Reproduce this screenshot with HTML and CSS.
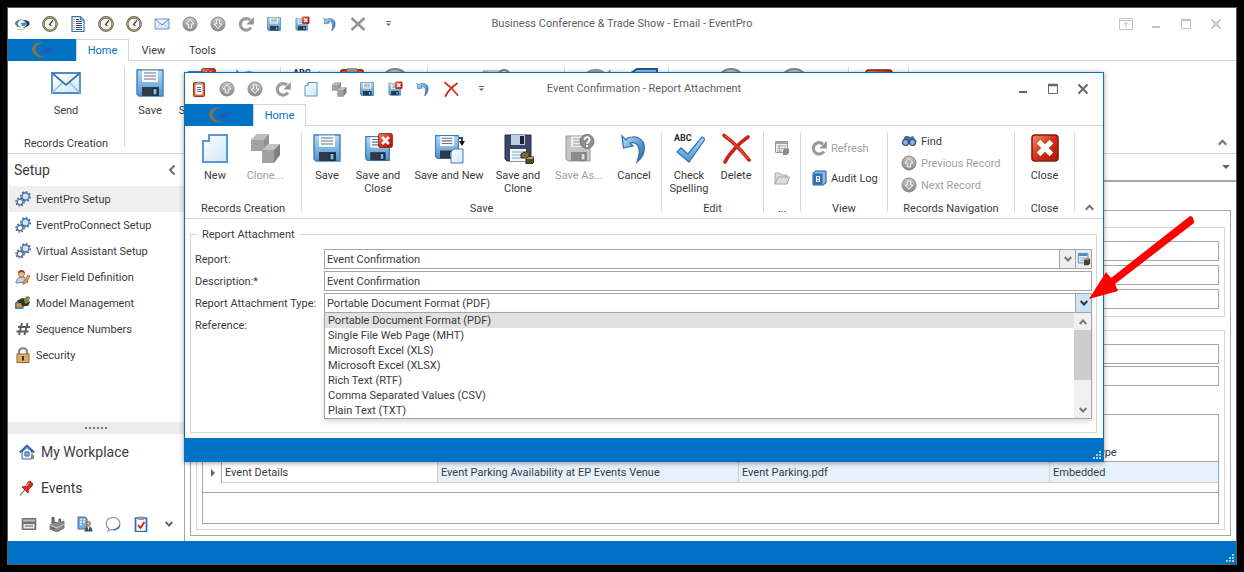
FILE: index.html
```html
<!DOCTYPE html>
<html lang="en">
<head>
<meta charset="utf-8">
<title>Business Conference &amp; Trade Show - Email - EventPro</title>
<link rel="stylesheet" href="styles.css">
</head>
<body>
<svg class="sprite" aria-hidden="true">
  <defs>
    <linearGradient id="gBlue" x1="0" y1="0" x2="0" y2="1"><stop offset="0" stop-color="#b5dcf8"/><stop offset="1" stop-color="#4f92cf"/></linearGradient>
    <linearGradient id="gPage" x1="0" y1="0" x2="1" y2="1"><stop offset="0" stop-color="#fff"/><stop offset="1" stop-color="#cfe6f8"/></linearGradient>
    <linearGradient id="gRed" x1="0" y1="0" x2="1" y2="1"><stop offset="0" stop-color="#e8906a"/><stop offset=".5" stop-color="#d2301a"/><stop offset="1" stop-color="#a81206"/></linearGradient>
    <linearGradient id="gGray" x1="0" y1="0" x2="0" y2="1"><stop offset="0" stop-color="#c6c6c6"/><stop offset="1" stop-color="#868686"/></linearGradient>
    <linearGradient id="gUndo" x1="0" y1="0" x2="1" y2="1"><stop offset="0" stop-color="#b9e2fb"/><stop offset="1" stop-color="#1d5fa8"/></linearGradient>
  </defs>
  <symbol id="floppy" viewBox="0 0 32 32">
    <path d="M3 3h26v26H5l-2-2z" fill="url(#gBlue)" stroke="#3f7fba" stroke-width="1.4"/>
    <path d="M8 3.500h16V15H8z" fill="#f7f9fb"/><path d="M10 6h12M10 9h12M10 12h12" stroke="#6f7782" stroke-width="1.2"/>
    <path d="M8 20h17v9H8z" fill="#2f3b46"/><path d="M19 21.500h4V28h-4z" fill="#79bdf0" stroke="#12202c"/>
  </symbol>
  <symbol id="badge" viewBox="0 0 16 16"><rect x="1.500" y="1.500" width="13" height="13" rx="1.500" fill="url(#gRed)" stroke="#8f1a0c" stroke-width=".8"/><path d="M4.800 4.800l6.400 6.400M11.200 4.800l-6.400 6.400" stroke="#fff" stroke-width="2.600"/></symbol>
  <symbol id="save-close" viewBox="0 0 32 32"><use href="#floppy" x="1" y="2" width="29" height="29"/><use href="#badge" x="15" y="0" width="17" height="17"/></symbol>
  <symbol id="page" viewBox="0 0 32 32"><path d="M10 3h18v27H4V9h6z" fill="url(#gPage)" stroke="#5a96cf" stroke-width="2"/><path d="M10 3v6H4" fill="none" stroke="#5a96cf"/></symbol>
  <symbol id="save-new" viewBox="0 0 32 32"><use href="#floppy" x="0" y="1" width="28" height="28"/><path d="M18 20l3-3h9v14H18z" fill="url(#gPage)" stroke="#3f7fba"/><path d="M26 6h3v4" fill="none" stroke="#111" stroke-width="1.500"/><path d="M26 9h6l-3 5z" fill="#111"/></symbol>
  <symbol id="save-clone" viewBox="0 0 32 32"><path d="M3 3h26v26H5l-2-2z" fill="#3e4569" stroke="#262b49"/><path d="M9 3h14v10H9z" fill="#b9d0e0"/><path d="M18 4h4v8h-4z" fill="#1c2334"/><path d="M8 17h16v12H8z" fill="#f2f7fc"/><path d="M10 20h12M10 23h12M10 26h9" stroke="#78a9d2"/><path d="M19 22l3-2h5v6h-8z" fill="#75693a" stroke="#383010"/><path d="M24 27l3-2h5v5l-2 2h-6z" fill="#574b20" stroke="#2b240b"/><path d="M24 27l3-2h5l-2 2z" fill="#b5a66f"/></symbol>
  <symbol id="save-as" viewBox="0 0 32 32"><path d="M3 4h24v25H5l-2-2z" fill="#c5c5c5" stroke="#999"/><path d="M8 4.500h13V15H8z" fill="#eee"/><path d="M10 7h10M10 10h9M10 13h9" stroke="#999"/><path d="M8 20h16v9H8z" fill="#8c8c8c"/><path d="M18 21.500h4V28h-4z" fill="#ddd" stroke="#777"/><circle cx="24" cy="9.500" r="7" fill="#8e8e8e" stroke="#777"/><path d="M21.500 8c0-4 5.500-3.500 5 0 0 2-2.500 2-2.500 4M24 13v2" fill="none" stroke="#fff" stroke-width="1.800"/></symbol>
  <symbol id="undo" viewBox="0 0 32 32"><path d="M4 4l1.500 12L15 14l-3-3c8-2 12 6 7 19 11-9 10-26-5-25-3 0-5 1-6 3z" fill="url(#gUndo)" stroke="#2b6fb3" stroke-width="1.200"/></symbol>
  <symbol id="delete" viewBox="0 0 32 32"><path d="M4 3.500C12 9 22 19 29 28M28 5C19 11 9 22 5 30" fill="none" stroke="#cb2413" stroke-width="3.600" stroke-linecap="round"/><path d="M5 4C12 9 21 18 28 27" fill="none" stroke="#ec6a56"/></symbol>
  <symbol id="cross" viewBox="0 0 32 32"><path d="M3 4l26 24M29 4L3 28" stroke="#939393" stroke-width="5"/></symbol>
  <symbol id="spell" viewBox="0 0 32 32"><path d="M4 20l4-4 7 6L29 5l3 2-16 23z" fill="url(#gBlue)" stroke="#3577bb" stroke-width="1.300"/></symbol>
  <symbol id="cubes" viewBox="0 0 32 32"><path d="M2 8l6-6h12v12l-5 5H2z" fill="#8f8f8f"/><path d="M2 8l6-6h12l-5 6z" fill="#bcbcbc"/><path d="M2 8h13v11H2z" fill="#a2a2a2"/><path d="M13 18l6-6h12v11l-6 8H13z" fill="#7f7f7f"/><path d="M13 18l6-6h12l-6 6z" fill="#c2c2c2"/><path d="M13 18h12v13H13z" fill="#a0a0a0"/></symbol>
  <symbol id="up" viewBox="0 0 16 16"><circle cx="8" cy="8" r="7" fill="url(#gGray)" stroke="#888"/><path d="M8 3.500L12 8H9.700v4H6.300V8H4z" fill="#aaa" stroke="#fff" stroke-width=".9"/></symbol>
  <symbol id="down" viewBox="0 0 16 16"><circle cx="8" cy="8" r="7" fill="url(#gGray)" stroke="#888"/><path d="M8 12.500L4 8h2.300V4h3.400v4H12z" fill="#aaa" stroke="#fff" stroke-width=".9"/></symbol>
  <symbol id="refresh" viewBox="0 0 16 16"><path d="M13 11.500A5.800 5.800 0 1 1 12 4" fill="none" stroke="#9b9b9b" stroke-width="3.200"/><path d="M15.800 1v7.500H8.300z" fill="#929292"/></symbol>
  <symbol id="clock" viewBox="0 0 16 16"><circle cx="8" cy="8" r="6.700" fill="#f4f6f2" stroke="#6c6a4c" stroke-width="2.400"/><circle cx="8" cy="8" r="6.700" fill="none" stroke="#b5b28f" stroke-width=".7"/><path d="M11 4.500L7.500 8.500l2 1.500" fill="none" stroke="#444" stroke-width="1.200"/></symbol>
  <symbol id="doc" viewBox="0 0 16 16"><path d="M2 .7h8.500L14 4v11.500H2z" fill="#fff" stroke="#3574b4" stroke-width="1.200"/><path d="M10.500.7V4H14" fill="#9cc5ea" stroke="#3574b4"/><path d="M6 3.500h3M6 5.500h6M6 7.500h6M6 9.500h6M6 11.500h6M6 13.500h6" stroke="#284f83"/><path d="M3.500 3.500h1M3.500 5.500h1M3.500 7.500h1M3.500 9.500h1M3.500 11.500h1M3.500 13.500h1" stroke="#d44"/></symbol>
  <symbol id="mail" viewBox="0 0 32 24"><path d="M2 2h28v20H2z" fill="url(#gPage)" stroke="#4d8ccb" stroke-width="1.800"/><path d="M2 22l11-11M30 22L19 11" stroke="#8ab8df" stroke-width="1.300"/><path d="M2 2l14 12L30 2" fill="none" stroke="#3c6ea5" stroke-width="1.700"/></symbol>
  <symbol id="logo" viewBox="0 0 16 16"><path d="M9 3.500C4 3 1 5 1 7.500S5 12 8 11.500C5 10.500 3.500 9 4 7s2.500-3 5-3.500z" fill="#5d83a8"/><path d="M8 4.500c5-1 8 1 7.500 3.500S11 12 8 11.500c3-.5 4.500-1.500 4.500-3.500S11 5 8 4.500z" fill="#222c42"/><path d="M7 7l6-1-2 4H8z" fill="#2f8fd8"/><path d="M3 12.500c3 2 6 1.500 8-.5" fill="none" stroke="#a9bf52"/></symbol>
  <symbol id="tab-logo" viewBox="0 0 24 20"><path d="M14 3C7 1 1 5 2 10.500c1 5 6 8 13 6.500-5-1-9-3-9-7.500S9 4 14 3z" fill="#777454"/><path d="M12 11l10-5c1 4-3 7-7 7h-4z" fill="#1f5db4"/></symbol>
  <symbol id="clipboard" viewBox="0 0 16 16"><rect x="2.500" y="1.500" width="11" height="14" rx="1" fill="#d5683c" stroke="#9e3419"/><path d="M4.500 3.500h7v10h-7z" fill="#fff"/><path d="M6 6.500h4M6 8.500h4M6 10.500h4" stroke="#3f74b0"/><path d="M5.500.5h5v2.500h-5z" fill="#999"/></symbol>
  <symbol id="list" viewBox="0 0 16 16"><path d="M1.500 1.500h12v11h-12z" fill="#eee" stroke="#989898"/><path d="M2 2h11v2H2z" fill="#a5a5a5"/><path d="M3 6h9M3 8.500h9M3 11h5M5.500 5v7" stroke="#aaa"/><path d="M9 10l2-1.500h4V13l-2 2H9z" fill="#8c8c8c"/></symbol>
  <symbol id="lookup" viewBox="0 0 16 16"><path d="M1.500 1.500h11v11h-11z" fill="#e3f1fc" stroke="#4884bd"/><path d="M2 2h10v2.500H2z" fill="#3f85ca"/><path d="M3 7h8M3 9.500h5" stroke="#77a6d0"/><path d="M8 9l2-1.500h5V13l-2 2H8z" fill="#4b4526"/><path d="M8 9l2-1.500h5L13 9z" fill="#a09a68"/></symbol>
  <symbol id="folder" viewBox="0 0 16 16"><path d="M1 14V3h5l1.500 2H13v2" fill="#ddd" stroke="#aaa"/><path d="M1 14L4 7h11.500L13 14z" fill="#dcdcdc" stroke="#a2a2a2"/></symbol>
  <symbol id="book" viewBox="0 0 16 16"><path d="M2 3l3-2h10v12l-3 2H2z" fill="#8db9e6" stroke="#235995"/><path d="M2.500 3.500h9v11h-9z" fill="#2f6fb7"/><path d="M5 6h4v6H5z" fill="#fff"/><path d="M7 6.500v2.500M7 10v1.500" stroke="#2f6fb7" stroke-width="1.500"/></symbol>
  <symbol id="find" viewBox="0 0 16 16"><path d="M4 3h3l2 1 3-1 4 6H1z" fill="#526f99"/><circle cx="4.500" cy="9.500" r="3" fill="#8fb4e0" stroke="#2c4a7a" stroke-width="1.200"/><circle cx="11.500" cy="9.500" r="3" fill="#8fb4e0" stroke="#2c4a7a" stroke-width="1.200"/></symbol>
  <symbol id="gears" viewBox="0 0 16 16"><circle cx="10.500" cy="5.500" r="3.600" fill="#d6e6f6" stroke="#5680b5" stroke-width="1.600"/><circle cx="10.500" cy="5.500" r="4.800" fill="none" stroke="#456a9b" stroke-width="1.400" stroke-dasharray="1.800 1.900"/><circle cx="5" cy="11" r="2.800" fill="#fff" stroke="#62789a" stroke-width="1.500"/><circle cx="5" cy="11" r="4.100" fill="none" stroke="#4a607f" stroke-width="1.300" stroke-dasharray="1.600 1.600"/></symbol>
  <symbol id="user" viewBox="0 0 16 16"><path d="M1 14c0-4 3-6 6-6s5 2 6 5z" fill="#c3d2dd" stroke="#6d7c88"/><circle cx="6.500" cy="5" r="3" fill="#eab88c" stroke="#80523a" stroke-width=".6"/><path d="M3 4c0-4 7-4 7 0l-3-1z" fill="#a83222"/><path d="M15 7l-4 7-3 1.500L9 12l4-6z" fill="#e4a04e" stroke="#ae5b2b" stroke-width=".7"/></symbol>
  <symbol id="model" viewBox="0 0 16 16"><path d="M0 8l3-3h6l2 3-3 6H0z" fill="#338da0"/><path d="M2 6l5-3 5 1 3 3-2 4H7z" fill="#383426"/><path d="M9 4l3-3 3 1-1 5-4 2z" fill="#7c8a53"/><path d="M1 9l5-1 1 3-4 2z" fill="#ee8d34"/></symbol>
  <symbol id="hash" viewBox="0 0 16 16"><path d="M7 2L4 14M12.500 2l-3 12M3 6h12M1.500 10.500h12" stroke="#5e5e5e" stroke-width="1.900"/></symbol>
  <symbol id="lock" viewBox="0 0 16 16"><path d="M4 8V5c0-5 8-5 8 0v3" fill="none" stroke="#858585" stroke-width="2.200"/><rect x="2" y="7" width="12" height="8.500" fill="#e3b67e" stroke="#916331"/><path d="M3 10h10M3 13h10" stroke="#c38e50"/><path d="M8 9v4.500" stroke="#4c3318" stroke-width="2"/></symbol>
  <symbol id="home" viewBox="0 0 16 16"><path d="M3 8v7h10V8L8 3.500z" fill="#e7f2fc" stroke="#3a68a8"/><path d="M.8 8.500L8 1.500l7.200 7" fill="none" stroke="#3565aa" stroke-width="1.900"/><path d="M6 8h4v4H6z" fill="#8ab6e2" stroke="#35609a"/><path d="M12 11h3v4h-3z" fill="#7d9c3a"/></symbol>
  <symbol id="pin" viewBox="0 0 16 16"><path d="M1 15.500l5-6" stroke="#8b8b8b" stroke-width="1.300"/><path d="M3 7l4-1 2-4 2-1 3 3-1 2-3 3-1 4z" fill="#d92c1c" stroke="#99180e" stroke-width=".8"/><path d="M7 6l3-3" stroke="#f89a8d" stroke-width="1.300"/></symbol>
  <symbol id="drive" viewBox="0 0 16 16"><rect x=".7" y="2" width="14.600" height="12" rx="1" fill="#6f746e"/><path d="M2 3.500h12v2H2z" fill="#b8c0b6"/><path d="M2.500 8h11v4.500h-11z" fill="#e3e6e1"/><path d="M4 10h8" stroke="#666"/></symbol>
  <symbol id="factory" viewBox="0 0 16 16"><path d="M1 9l5-3 4 1 5-2v7l-7 4-7-3z" fill="#898989" stroke="#555" stroke-width=".7"/><path d="M3 7V1.500h2V7M10 6V3h1.500v3" fill="#777" stroke="#555"/><path d="M1 9l7 3 7-4" fill="none" stroke="#cdcdcd"/><path d="M3 11.500v1M5 12v1" stroke="#222"/></symbol>
  <symbol id="building" viewBox="0 0 16 16"><path d="M1 1h7l2 1.500V13H1z" fill="#78a9d8" stroke="#4172a5"/><path d="M3 3.500h2M3 6h2M3 8.500h2M6 3.500h2M6 6h2" stroke="#e5f2fd" stroke-width="1.300"/><circle cx="11.500" cy="7.500" r="2" fill="#e9b483" stroke="#70452a" stroke-width=".8"/><path d="M7.500 15.500c0-7 8-7 8 0z" fill="#444e58"/><path d="M10.500 10.500h2l-1 4z" fill="#fff"/></symbol>
  <symbol id="bubble" viewBox="0 0 16 16"><path d="M4 13C-1 9 1 1.500 8 1.500S17 9 12 12.500c-2 1.500-4 1.500-6 1l-3 1.500z" fill="#fff" stroke="#8193a6" stroke-width="1.100"/><path d="M8 13.800c3 0 6-1.500 7-4.800" fill="none" stroke="#3c7ec2" stroke-width="1.300"/></symbol>
  <symbol id="task" viewBox="0 0 16 16"><path d="M2.500 2h11v13.500h-11z" fill="#fff" stroke="#2f6db1" stroke-width="1.700"/><path d="M5 .5h6V4H5z" fill="#9a9a9a"/><path d="M5 9l2.500 3L11.500 6" fill="none" stroke="#c7271a" stroke-width="1.900"/></symbol>
  <symbol id="caret-menu" viewBox="0 0 8 8"><path d="M2 1.500h5" stroke="#666"/><path d="M2 3.500h5L4.500 6z" fill="#666"/></symbol>
  <symbol id="chev-down" viewBox="0 0 8 8"><path d="M.7 2L4 5.500 7.300 2" fill="none" stroke="currentColor" stroke-width="1.900"/></symbol>
  <symbol id="chev-up" viewBox="0 0 8 8"><path d="M.7 6L4 2.500 7.300 6" fill="none" stroke="currentColor" stroke-width="1.900"/></symbol>
  <symbol id="chev-left" viewBox="0 0 8 12"><path d="M6.500 1.500L2 6l4.500 4.500" fill="none" stroke="#666" stroke-width="1.800"/></symbol>
  <symbol id="w-pin" viewBox="0 0 14 12"><path d="M.5.5h13v11H.5zM.5 2.500h13M7 10V4M4.500 6.500L7 4l2.500 2.500" fill="none" stroke="currentColor"/></symbol>
  <symbol id="w-min" viewBox="0 0 12 12"><path d="M2 9h8" stroke="currentColor" stroke-width="2"/></symbol>
  <symbol id="w-max" viewBox="0 0 12 12"><path d="M1.500 1.500h9v9h-9z" fill="none" stroke="currentColor"/><path d="M1 2h10" stroke="currentColor" stroke-width="2.500"/></symbol>
  <symbol id="w-close" viewBox="0 0 12 12"><path d="M1.500 1.500l9 9M10.500 1.500l-9 9" stroke="currentColor" stroke-width="2"/></symbol>
  <symbol id="grip" viewBox="0 0 8 8"><path d="M6 0h2v2H6zM3 3h2v2H3zM6 3h2v2H6zM0 6h2v2H0zM3 6h2v2H3zM6 6h2v2H6z" fill="#a8cbe8"/></symbol>
</svg>

<main class="window">
  <header class="titlebar">
    <div class="quick">
      <button aria-label="EventPro"><svg><use href="#logo"/></svg></button>
      <button aria-label="Recent"><svg><use href="#clock"/></svg></button>
      <button aria-label="Document"><svg><use href="#doc"/></svg></button>
      <button aria-label="Schedule"><svg><use href="#clock"/></svg></button>
      <button aria-label="History"><svg><use href="#clock"/></svg></button>
      <button aria-label="Send"><svg><use href="#mail"/></svg></button>
      <button aria-label="Previous"><svg><use href="#up"/></svg></button>
      <button aria-label="Next"><svg><use href="#down"/></svg></button>
      <button aria-label="Refresh"><svg><use href="#refresh"/></svg></button>
      <button aria-label="Save"><svg><use href="#floppy"/></svg></button>
      <button aria-label="Save and Close"><svg><use href="#save-close"/></svg></button>
      <button aria-label="Undo"><svg><use href="#undo"/></svg></button>
      <button aria-label="Delete"><svg><use href="#cross"/></svg></button>
      <button class="more" aria-label="More"><svg><use href="#caret-menu"/></svg></button>
    </div>
    <h1>Business Conference &amp; Trade Show - Email - EventPro</h1>
    <div class="controls inactive">
      <button class="wide" aria-label="Ribbon display"><svg><use href="#w-pin"/></svg></button>
      <button aria-label="Minimize"><svg><use href="#w-min"/></svg></button>
      <button aria-label="Maximize"><svg><use href="#w-max"/></svg></button>
      <button aria-label="Close"><svg><use href="#w-close"/></svg></button>
    </div>
  </header>
  <nav class="tabs">
    <button class="app" aria-label="Application menu"><svg><use href="#tab-logo"/></svg></button>
    <button class="tab active">Home</button>
    <button class="tab">View</button>
    <button class="tab">Tools</button>
  </nav>
  <div class="ribbon">
    <section class="group g-send">
      <div class="tools"><button class="big fill"><svg><use href="#mail"/></svg>Send</button></div>
      <h2>Records Creation</h2>
    </section>
    <section class="group g-save-back">
      <div class="tools">
        <button class="big w46"><svg><use href="#floppy"/></svg>Save</button>
        <button class="big w56"><svg><use href="#save-close"/></svg>Save and Close</button>
        <button class="big w40" aria-label="Cancel"><svg><use href="#undo"/></svg></button>
      </div>
    </section>
    <section class="group g-147"><div class="tools">
      <button class="big w46" aria-label="Check Spelling"><span class="abc">ABC</span><svg><use href="#spell"/></svg></button>
      <button class="big w46" aria-label="Paste"><svg><use href="#clipboard"/></svg></button>
      <button class="big w40" aria-label="Previous"><svg><use href="#up"/></svg></button>
    </div></section>
    <section class="group g-137"><div class="tools"><button class="big fill" aria-label="Save As"><svg><use href="#save-as"/></svg></button></div></section>
    <section class="group g-104"><div class="tools">
      <button class="big w56" aria-label="Refresh"><svg><use href="#refresh"/></svg></button>
      <button class="big w40" aria-label="Audit Log"><svg><use href="#book"/></svg></button>
    </div></section>
    <section class="group g-180"><div class="tools centered">
      <button class="big w70" aria-label="Previous Record"><svg><use href="#up"/></svg></button>
      <button class="big w56" aria-label="Next Record"><svg><use href="#down"/></svg></button>
    </div></section>
    <section class="group g-60"><div class="tools"><button class="big fill" aria-label="Close"><svg><use href="#badge"/></svg></button></div></section>
    <button class="collapse push" aria-label="Collapse ribbon"><svg><use href="#chev-up"/></svg></button>
  </div>

  <div class="body">
    <aside class="sidebar">
      <header><h2>Setup</h2><button aria-label="Collapse"><svg><use href="#chev-left"/></svg></button></header>
      <nav class="items">
        <a class="current" href="#"><svg><use href="#gears"/></svg>EventPro Setup</a>
        <a href="#"><svg><use href="#gears"/></svg>EventProConnect Setup</a>
        <a href="#"><svg><use href="#gears"/></svg>Virtual Assistant Setup</a>
        <a href="#"><svg><use href="#user"/></svg>User Field Definition</a>
        <a href="#"><svg><use href="#model"/></svg>Model Management</a>
        <a href="#"><svg><use href="#hash"/></svg>Sequence Numbers</a>
        <a href="#"><svg><use href="#lock"/></svg>Security</a>
      </nav>
      <div class="splitter"><i></i><i></i><i></i><i></i><i></i><i></i></div>
      <nav class="areas">
        <a href="#"><svg><use href="#home"/></svg>My Workplace</a>
        <a href="#"><svg><use href="#pin"/></svg>Events</a>
      </nav>
      <div class="area-icons">
        <button aria-label="Storage"><svg><use href="#drive"/></svg></button>
        <button aria-label="Factory"><svg><use href="#factory"/></svg></button>
        <button aria-label="Accounts"><svg><use href="#building"/></svg></button>
        <button aria-label="Communications"><svg><use href="#bubble"/></svg></button>
        <button aria-label="Tasks"><svg><use href="#task"/></svg></button>
        <button class="small" aria-label="More areas"><svg><use href="#chev-down"/></svg></button>
      </div>
    </aside>
    <section class="work">
      <div class="strip"><button aria-label="Open tabs"><i></i></button></div>
      <div class="panel">
        <div class="box first">
          <input aria-label="From"><input aria-label="To"><input aria-label="Subject">
        </div>
        <div class="box second">
          <input aria-label="Name"><input aria-label="Reference">
          <div class="grid">
            <table>
              <colgroup><col class="c-mark"><col class="c-name"><col class="c-desc"><col class="c-file"><col></colgroup>
              <thead><tr><th></th><th></th><th></th><th></th><th>Storage Type</th></tr></thead>
              <tbody><tr><td class="mark"><i></i></td><td>Event Details</td><td class="tint">Event Parking Availability at EP Events Venue</td><td class="tint">Event Parking.pdf</td><td class="tint">Embedded</td></tr></tbody>
            </table>
            <div class="grid-foot"></div>
          </div>
        </div>
      </div>
    </section>
  </div>
  <footer class="status"><svg><use href="#grip"/></svg></footer>
</main>

<div class="dialog" role="dialog" aria-labelledby="dialog-title">
  <header class="titlebar">
    <div class="quick">
      <button aria-label="Report"><svg><use href="#clipboard"/></svg></button>
      <button aria-label="Previous"><svg><use href="#up"/></svg></button>
      <button aria-label="Next"><svg><use href="#down"/></svg></button>
      <button aria-label="Refresh"><svg><use href="#refresh"/></svg></button>
      <button aria-label="New"><svg><use href="#page"/></svg></button>
      <button aria-label="Clone"><svg><use href="#cubes"/></svg></button>
      <button aria-label="Save"><svg><use href="#floppy"/></svg></button>
      <button aria-label="Save and Close"><svg><use href="#save-close"/></svg></button>
      <button aria-label="Undo"><svg><use href="#undo"/></svg></button>
      <button aria-label="Delete"><svg><use href="#delete"/></svg></button>
      <button class="more" aria-label="More"><svg><use href="#caret-menu"/></svg></button>
    </div>
    <h1 id="dialog-title">Event Confirmation - Report Attachment</h1>
    <div class="controls">
      <button aria-label="Minimize"><svg><use href="#w-min"/></svg></button>
      <button aria-label="Maximize"><svg><use href="#w-max"/></svg></button>
      <button aria-label="Close"><svg><use href="#w-close"/></svg></button>
    </div>
  </header>
  <nav class="tabs">
    <button class="app" aria-label="Application menu"><svg><use href="#tab-logo"/></svg></button>
    <button class="tab active">Home</button>
  </nav>
  <div class="ribbon">
    <section class="group g-send">
      <div class="tools">
        <button class="big w56"><svg><use href="#page"/></svg>New</button>
        <button class="big w44" disabled><svg><use href="#cubes"/></svg>Clone...</button>
      </div>
      <h2>Records Creation</h2>
    </section>
    <section class="group g-save">
      <div class="tools">
        <button class="big w46"><svg><use href="#floppy"/></svg>Save</button>
        <button class="big w56"><svg><use href="#save-close"/></svg>Save and<br>Close</button>
        <button class="big w86"><svg><use href="#save-new"/></svg>Save and New</button>
        <button class="big w52"><svg><use href="#save-clone"/></svg>Save and<br>Clone</button>
        <button class="big w70" disabled><svg><use href="#save-as"/></svg>Save As...</button>
        <button class="big w40"><svg><use href="#undo"/></svg>Cancel</button>
      </div>
      <h2>Save</h2>
    </section>
    <section class="group g-edit">
      <div class="tools">
        <button class="big w50"><span class="abc">ABC</span><svg><use href="#spell"/></svg>Check<br>Spelling</button>
        <button class="big w44"><svg><use href="#delete"/></svg>Delete</button>
      </div>
      <h2>Edit</h2>
    </section>
    <section class="group g-dots">
      <div class="tools stack two">
        <button class="row" disabled aria-label="Form"><svg><use href="#list"/></svg></button>
        <button class="row" disabled aria-label="Open"><svg><use href="#folder"/></svg></button>
      </div>
      <h2>...</h2>
    </section>
    <section class="group g-view">
      <div class="tools stack two">
        <button class="row" disabled><svg><use href="#refresh"/></svg>Refresh</button>
        <button class="row"><svg><use href="#book"/></svg>Audit Log</button>
      </div>
      <h2>View</h2>
    </section>
    <section class="group g-nav">
      <div class="tools stack">
        <button class="row"><svg><use href="#find"/></svg>Find</button>
        <button class="row" disabled><svg><use href="#up"/></svg>Previous Record</button>
        <button class="row" disabled><svg><use href="#down"/></svg>Next Record</button>
      </div>
      <h2>Records Navigation</h2>
    </section>
    <section class="group g-60">
      <div class="tools"><button class="big fill"><svg><use href="#badge"/></svg>Close</button></div>
      <h2>Close</h2>
    </section>
    <button class="collapse" aria-label="Collapse ribbon"><svg><use href="#chev-up"/></svg></button>
  </div>
  <form class="content">
    <fieldset>
      <legend>Report Attachment</legend>
      <div class="field">
        <label for="report">Report:</label>
        <div class="editor">
          <input id="report" value="Event Confirmation">
          <button type="button" aria-label="Open list"><svg class="chev"><use href="#chev-down"/></svg></button>
          <button type="button" aria-label="Look up"><svg><use href="#lookup"/></svg></button>
        </div>
      </div>
      <div class="field">
        <label for="description">Description:*</label>
        <div class="editor"><input id="description" value="Event Confirmation"></div>
      </div>
      <div class="field">
        <label for="type">Report Attachment Type:</label>
        <div class="editor">
          <select id="type"><option>Portable Document Format (PDF)</option></select>
          <span class="open"><svg class="chev"><use href="#chev-down"/></svg></span>
          <div class="menu">
            <ul role="listbox" aria-label="Report Attachment Type">
              <li role="option" aria-selected="true">Portable Document Format (PDF)</li>
              <li role="option">Single File Web Page (MHT)</li>
              <li role="option">Microsoft Excel (XLS)</li>
              <li role="option">Microsoft Excel (XLSX)</li>
              <li role="option">Rich Text (RTF)</li>
              <li role="option">Comma Separated Values (CSV)</li>
              <li role="option">Plain Text (TXT)</li>
            </ul>
            <div class="scroll">
              <button type="button" aria-label="Scroll up"><svg class="chev"><use href="#chev-up"/></svg></button>
              <div class="track"><div class="thumb"></div></div>
              <button type="button" aria-label="Scroll down"><svg class="chev"><use href="#chev-down"/></svg></button>
            </div>
          </div>
        </div>
      </div>
      <div class="field"><span class="label">Reference:</span></div>
    </fieldset>
  </form>
  <footer class="status"><svg><use href="#grip"/></svg></footer>
  <svg class="pointer" viewBox="0 0 106 86" aria-hidden="true"><path d="M0 84L17 57l5 6L101 1q4 0 4 7L26 69l3 7z" fill="#f00"/></svg>
</div>
</body>
</html>
```

FILE: styles.css
```css
* { box-sizing: border-box; }

body {
  margin: 0;
  padding: 7px;
  height: 100vh;
  display: flex;
  background: #000;
  color: #3b3b3b;
  font: 11px/13px Roboto, Tahoma, sans-serif;
}

h1, h2, ul { margin: 0; padding: 0; font: inherit; list-style: none; }
button, input, select { margin: 0; padding: 0; border: 0; background: none; color: inherit; font: inherit; border-radius: 0; }
a { color: inherit; text-decoration: none; }
svg { display: block; flex: none; width: 16px; height: 16px; }
.sprite { position: absolute; width: 0; height: 0; }

.window {
  flex: 1;
  min-width: 0;
  display: flex;
  flex-direction: column;
  border: 1px solid #5e5e5e;
  background: #fff;
}

.dialog {
  position: absolute;
  top: 72px;
  left: 184px;
  right: 140px;
  display: flex;
  flex-direction: column;
  border: 1px solid #0072c6;
  background: #fff;
  box-shadow: 0 1px 5px rgba(0, 0, 0, .4);
}

/* Title bar */
.titlebar { display: grid; grid-template-columns: 1fr auto 1fr; align-items: center; height: 31px; }
.titlebar h1 { color: #5f5f5f; }
.quick { display: flex; }
.quick button { width: 28px; height: 28px; display: grid; place-items: center; }
.quick .more { width: 32px; }
.quick .more svg { width: 8px; height: 8px; }
.controls { display: flex; justify-content: flex-end; padding-right: 5px; color: #6d6368; }
.controls.inactive { color: #c4c4c4; }
.controls button { width: 30px; height: 28px; display: grid; place-items: center; }
.controls svg { width: 12px; height: 12px; }
.controls .wide svg { width: 14px; }

/* Tabs */
.tabs { display: flex; height: 22px; border-bottom: 1px solid #d5d5d5; }
.tabs button { height: 22px; }
.tabs .app { width: 68px; background: #0072c6; display: grid; place-items: center; }
.tabs .app svg { width: 24px; height: 20px; }
.tabs .tab { width: 49px; }
.tabs .active { width: 53px; color: #0072c6; background: #fff; border: 1px solid #d5d5d5; border-bottom: 0; }

/* Ribbon */
.ribbon { display: flex; height: 93px; padding: 6px 0; border-bottom: 1px solid #d5d5d5; }
.group { display: flex; flex-direction: column; justify-content: space-between; border-right: 1px solid #d9d9d9; height: 80px; }
.group h2 { height: 10px; text-align: center; white-space: nowrap; }
.tools { display: flex; padding: 0 2px; }
.tools.centered { justify-content: center; }
.big { position: relative; display: flex; flex-direction: column; align-items: center; }
.big.fill { flex: 1; }
.big svg { width: 32px; height: 32px; margin-bottom: 5px; }
.abc { position: absolute; top: 2px; left: 10px; font-size: 9px; line-height: 9px; font-weight: 700; color: #2a2d3c; }
button:disabled { color: #a0a0a0; }
.stack { flex-direction: column; align-items: flex-start; padding-top: 1px; gap: 6px; }
.stack.two { padding-top: 8px; gap: 14px; }
.row { display: flex; align-items: center; gap: 4px; height: 16px; white-space: nowrap; }
.collapse { align-self: flex-end; width: 28px; height: 10px; display: grid; place-items: center; color: #777; }
.collapse svg { width: 9px; height: 9px; }
.collapse.push { margin-left: auto; }
.w40 { width: 40px; } .w44 { width: 44px; } .w46 { width: 46px; } .w50 { width: 50px; }
.w52 { width: 52px; } .w56 { width: 56px; } .w70 { width: 70px; } .w86 { width: 86px; }
.g-send { width: 117px; }
.g-save { width: 360px; }
.g-save-back { width: 156px; }
.g-edit { width: 102px; }
.g-dots { width: 37px; }
.g-view { width: 87px; }
.g-nav { width: 127px; }
.g-60 { width: 60px; }
.g-104 { width: 104px; }
.g-137 { width: 137px; }
.g-147 { width: 147px; }
.g-180 { width: 180px; }
.g-dots .stack, .g-view .stack { padding-left: 10px; }
.g-nav .stack { padding-left: 13px; }

/* Main area */
.body { flex: 1; min-height: 0; display: flex; }
.sidebar { width: 177px; display: flex; flex-direction: column; border-right: 1px solid #a5a5a5; }
.sidebar header { display: flex; align-items: center; justify-content: space-between; height: 32px; padding: 0 8px 0 6px; font-size: 14px; }
.sidebar header svg { width: 8px; height: 12px; }
.items { flex: 1; }
.items a { display: flex; align-items: center; gap: 5px; height: 26px; margin-left: 1px; padding-left: 6px; }
.items .current { background: #efefef; }
.splitter { display: flex; gap: 2px; justify-content: center; align-items: center; height: 12px; background: #ececec; }
.splitter i { width: 2px; height: 2px; background: #777; }
.areas a { display: flex; align-items: center; gap: 6px; height: 36px; padding-left: 11px; font-size: 14px; }
.area-icons { display: flex; height: 35px; padding-left: 7px; }
.area-icons button { width: 28px; display: grid; place-items: center; color: #666; }
.area-icons .small svg { width: 8px; height: 8px; }

.work { flex: 1; min-width: 0; display: flex; flex-direction: column; }
.strip { height: 28px; border-bottom: 2px solid #a9a9a9; display: flex; justify-content: flex-end; align-items: center; }
.strip button { width: 20px; height: 20px; display: grid; place-items: center; }
.strip i { border: 4px solid transparent; border-top-color: #6d6368; border-bottom: 0; }
.panel { flex: 1; min-height: 0; display: flex; flex-direction: column; gap: 13px; margin: 28px 5px 5px; padding: 16px 5px 5px; border: 1px solid #a5a5a5; }
.box { display: flex; flex-direction: column; padding: 13px 5px 7px; border: 1px solid #d5d5d5; }
.box input { height: 20px; border: 1px solid #a5a5a5; padding: 0 3px; }
.first { gap: 4px; }
.second { flex: 1; gap: 2px; padding-bottom: 5px; }
.grid { flex: 1; margin-top: 26px; display: flex; flex-direction: column; border: 1px solid #a5a5a5; }
.grid table { width: 100%; table-layout: fixed; border-collapse: separate; border-spacing: 0; }
.c-mark { width: 19px; } .c-name { width: 216px; } .c-desc { width: 301px; } .c-file { width: 311px; }
.grid th { height: 47px; padding: 28px 3px 0; border-bottom: 1px solid #a5a5a5; font-weight: 400; text-align: left; }
.grid td { height: 21px; padding: 0 3px; border-right: 1px solid #d0d0d0; border-bottom: 1px solid #d0d0d0; }
.grid td:last-child { border-right: 0; }
.grid .mark { border-right-color: #a5a5a5; border-bottom: 0; padding-left: 8px; }
.mark i { display: block; width: 0; border: 4px solid transparent; border-left-color: #666; border-right: 0; }
.grid .tint { background: #e5f1fb; }
.grid-foot { flex: 1; margin-top: 9px; border-top: 1px solid #a5a5a5; }

/* Form */
.content { padding: 8px 6px 5px 5px; }
fieldset { margin: 0; min-width: 0; min-height: 206px; padding: 6px 4px 0; border: 1px solid #d5d5d5; }
legend { margin-left: 2px; padding: 0 5px; line-height: 15px; height: 15px; }
.field { display: grid; grid-template-columns: 129px 1fr; align-items: center; height: 22px; }
.editor { position: relative; display: flex; height: 20px; border: 1px solid #a5a5a5; }
.editor input, .editor select { flex: 1; min-width: 0; padding: 0 2px; appearance: none; outline: 0; }
.editor > button, .open { width: 16px; display: grid; place-items: center; border-left: 1px solid #a5a5a5; background: #efefef; }
.editor > button svg { width: 14px; height: 14px; }
.open { background: #cce4f7; color: #333; }
.editor svg.chev { width: 8px; height: 8px; }
.editor > button, .scroll button { color: #777; }
.menu { position: absolute; top: 18px; left: -1px; right: -1px; z-index: 1; display: flex; background: #fff; border: 1px solid #a5a5a5; box-shadow: 0 3px 5px rgba(0, 0, 0, .14); }
.menu ul { flex: 1; }
.menu li { height: 15px; line-height: 15px; padding-left: 3px; }
.menu [aria-selected] { background: #e1e1e1; }
.scroll { width: 17px; display: flex; flex-direction: column; background: #f0f0f0; }
.scroll button { height: 17px; display: grid; place-items: center; }
.track { flex: 1; }
.thumb { height: 70%; background: #cdcdcd; }

.status { display: flex; justify-content: flex-end; align-items: flex-end; height: 23px; padding: 2px; background: #0072c6; }
.status svg { width: 8px; height: 8px; }

.pointer { position: absolute; top: 142px; right: -92px; width: 106px; height: 86px; }
```
